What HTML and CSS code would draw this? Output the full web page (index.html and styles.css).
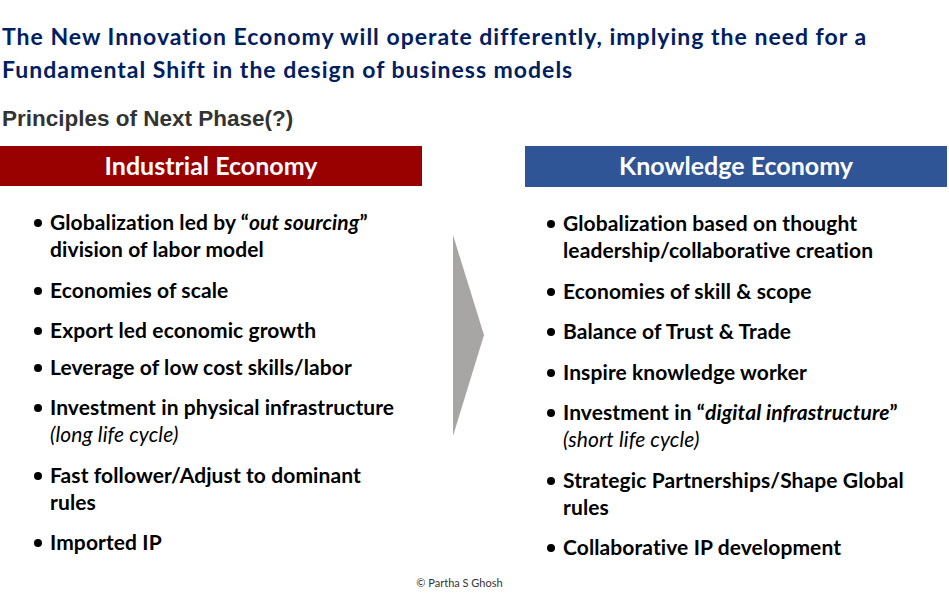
FILE: index.html
```html
<!DOCTYPE html>
<html>
<head>
<meta charset="utf-8">
<link rel="stylesheet" href="styles.css">
</head>
<body>
<div class="slide">
  <h1 class="title">The New Innovation Economy will operate differently, implying the need for a Fundamental Shift in the design of business models</h1>
  <h2 class="subtitle">Principles of Next Phase(?)</h2>
  <div class="compare">
    <section class="col col-left">
      <div class="bar bar-red">Industrial Economy</div>
      <ul class="points">
        <li>Globalization led by “<i>out sourcing</i>” division of labor model</li>
        <li>Economies of scale</li>
        <li class="tight">Export led economic growth</li>
        <li>Leverage of low cost skills/labor</li>
        <li>Investment in physical infrastructure <span class="note">(long life cycle)</span></li>
        <li>Fast follower/Adjust to dominant rules</li>
        <li>Imported IP</li>
      </ul>
    </section>
    <div class="arrow-col">
      <svg class="arrow" width="32" height="202" viewBox="0 0 32 202"><polygon points="0,0 31,100 0,201" fill="#A8A5A5"/></svg>
    </div>
    <section class="col col-right">
      <div class="bar bar-blue">Knowledge Economy</div>
      <ul class="points">
        <li>Globalization based on thought leadership/collaborative creation</li>
        <li>Economies of skill &amp; scope</li>
        <li>Balance of Trust &amp; Trade</li>
        <li>Inspire knowledge worker</li>
        <li>Investment in “<i>digital infrastructure</i>” <span class="note">(short life cycle)</span></li>
        <li>Strategic Partnerships/Shape Global rules</li>
        <li>Collaborative IP development</li>
      </ul>
    </section>
  </div>
  <div class="footer">© Partha S Ghosh</div>
</div>
</body>
</html>
```
FILE: styles.css
```css
html, body {
  margin: 0;
  padding: 0;
  background: #ffffff;
}
.slide {
  width: 949px;
  height: 607px;
  position: relative;
  overflow: hidden;
  font-family: Lato, "Open Sans", sans-serif;
}
.title {
  margin: 0;
  padding: 20px 0 0 2px;
  width: 890px;
  font-size: 23px;
  letter-spacing: 1px;
  line-height: 33px;
  font-weight: 700;
  color: #002060;
}
.subtitle {
  margin: 0;
  padding: 20px 0 0 2px;
  font-family: "Liberation Sans", Arial, sans-serif;
  font-size: 22.5px;
  line-height: 26px;
  font-weight: 700;
  color: #333333;
}
.compare {
  display: grid;
  grid-template-columns: 422px 103px 422px;
  margin-top: 14px;
}
.bar {
  height: 40px;
  display: flex;
  align-items: center;
  justify-content: center;
  padding-bottom: 3px;
  box-sizing: border-box;
  color: #ffffff;
  font-size: 25px;
  font-weight: 700;
}
.bar-red { background: #990000; }
.bar-blue { background: #2F5597; height: 41px; }
.points {
  list-style: none;
  margin: 0;
  padding: 22px 0 0 50px;
  width: 352px;
}
.col-right .points { padding-left: 38px; }
.points li {
  position: relative;
  font-size: 21px;
  letter-spacing: 0.1px;
  line-height: 27px;
  font-weight: 700;
  color: #000000;
  margin-bottom: 13.5px;
}
.col-left .points li.tight { margin-bottom: 9.5px; }
.points li::before {
  content: "";
  position: absolute;
  left: -16px;
  top: 11px;
  width: 8px;
  height: 8px;
  border-radius: 50%;
  background: #000;
}
.points i { font-style: italic; }
.note {
  display: block;
  font-style: italic;
  font-weight: 400;
}
.arrow-col {
  display: flex;
  justify-content: flex-start;
  padding: 89px 0 0 31px;
}
.footer {
  position: absolute;
  left: 0;
  right: 0;
  top: 576px;
  text-align: center;
  font-size: 11px;
  color: #333;
  padding-right: 30px;
}
```
